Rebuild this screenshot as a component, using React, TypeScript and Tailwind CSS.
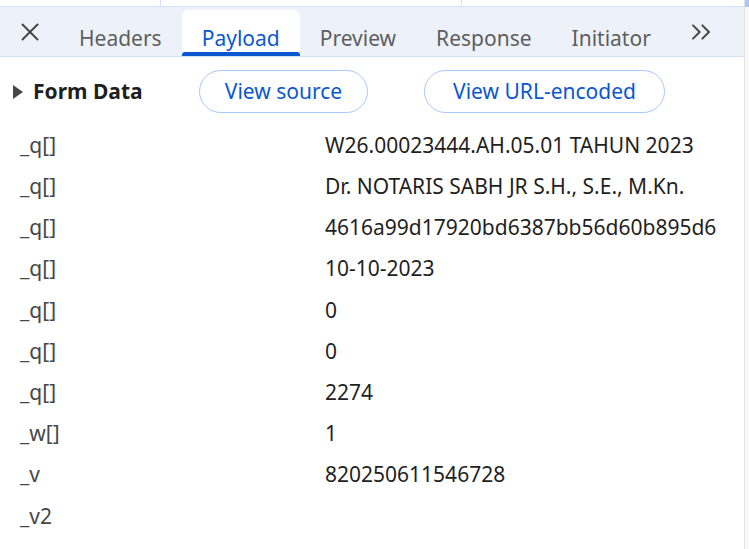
import { X, ChevronsRight } from 'lucide-react'

const rows: [string, string][] = [
  ['_q[]', 'W26.00023444.AH.05.01 TAHUN 2023'],
  ['_q[]', 'Dr. NOTARIS SABH JR S.H., S.E., M.Kn.'],
  ['_q[]', '4616a99d17920bd6387bb56d60b895d6'],
  ['_q[]', '10-10-2023'],
  ['_q[]', '0'],
  ['_q[]', '0'],
  ['_q[]', '2274'],
  ['_w[]', '1'],
  ['_v', '820250611546728'],
  ['_v2', ''],
]

const tabs = ['Headers', 'Payload', 'Preview', 'Response', 'Initiator']

export default function App() {
  return (
    <div className="w-[749px] h-[549px] flex bg-white overflow-hidden font-['Noto_Sans',sans-serif]">
      <div className="flex-1 flex flex-col min-w-0">
        {/* strip of the panel above */}
        <div className="h-[7px] flex border-b border-[#d3e3fd]">
          <div className="w-[161px] border-r border-[#d3e3fd]" />
          <div className="w-[301px] border-r border-[#d3e3fd]" />
          <div className="flex-1" />
        </div>

        {/* tab bar */}
        <div className="h-[50px] flex items-end bg-[#edf2fa] border-b border-[#d3e3fd]">
          <div className="w-[59px] h-full flex items-center justify-center">
            <X className="w-[30px] h-[30px] text-[#474747]" strokeWidth={1.6} />
          </div>
          {tabs.map((t) => {
            const active = t === 'Payload'
            return (
              <div
                key={t}
                className={`relative h-[46px] px-[20px] flex items-center text-[21px] rounded-t-[6px] ${
                  active ? 'bg-white text-[#0b57d0]' : 'text-[#5e5e5e]'
                }`}
              >
                <span className="pt-[11px]">{t}</span>
                {active && (
                  <div className="absolute left-0 right-0 bottom-0 h-[4px] rounded-t-[3px] bg-[#0b57d0]" />
                )}
              </div>
            )
          })}
          <div className="h-full flex items-center pl-[14px]">
            <ChevronsRight className="w-[32px] h-[32px] text-[#474747]" strokeWidth={1.5} />
          </div>
        </div>

        {/* form data header */}
        <div className="flex items-center pt-[13px] pb-[12px]">
          <div className="w-[199px] flex items-center pl-[13px]">
            <svg width="10" height="14" viewBox="0 0 10 14" className="mr-[10px]">
              <path d="M0 0 L10 7 L0 14 Z" fill="#474747" />
            </svg>
            <span className="text-[21px] font-bold text-[#1f1f1f]">Form Data</span>
          </div>
          <button className="h-[43px] w-[169px] rounded-full border border-[#a8c7fa] text-[21px] text-[#0b57d0]">
            View source
          </button>
          <button className="ml-[56px] h-[43px] w-[241px] rounded-full border border-[#a8c7fa] text-[21px] text-[#0b57d0]">
            View URL-encoded
          </button>
        </div>

        {/* rows */}
        <div className="flex flex-col">
          {rows.map(([k, v], i) => (
            <div key={i} className="h-[41.2px] flex items-center text-[21px] text-[#1f1f1f]">
              <div className="w-[325px] pl-[20px] text-[#474747]">{k}</div>
              <div className="whitespace-nowrap">{v}</div>
            </div>
          ))}
        </div>
      </div>
      <div className="w-[5px] flex flex-col border-l border-[#e3e3e3] bg-[#f8f8f8]">
        <div className="h-[7px] bg-[#a8c7fa]" />
      </div>
    </div>
  )
}
